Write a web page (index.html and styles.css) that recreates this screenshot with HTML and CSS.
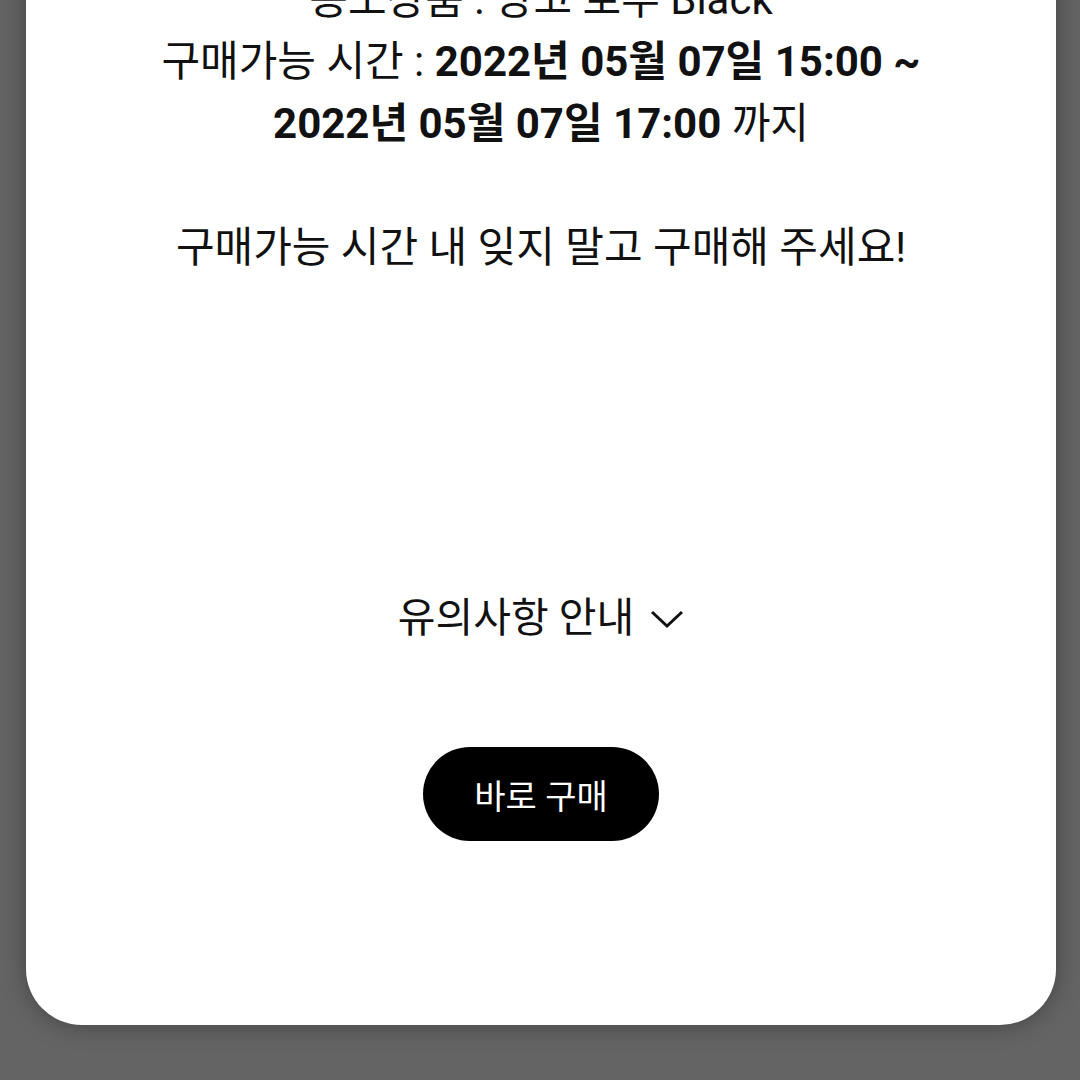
FILE: index.html
```html
<!DOCTYPE html>
<html lang="ko">
<head>
    <meta charset="UTF-8">
    <meta name="viewport" content="width=device-width, initial-scale=1.0">
    <title>응모 안내</title>
    <link rel="stylesheet" href="styles.css">
</head>
<body>

    <div class="sheet">
        <p class="info">
            응모상품 : 앙고 로부 Black<br>
            구매가능 시간 : <strong>2022년 05월 07일 15:00 ~ 2022년 05월 07일 17:00</strong> 까지<br>
            <br>
            구매가능 시간 내 잊지 말고 구매해 주세요!
        </p>

        <div class="notice-toggle">
            <span>유의사항 안내</span>
            <svg class="chevron" width="34" height="20" viewBox="0 0 34 20">
                <path d="M2 3 L17 17 L32 3" fill="none" stroke="#111" stroke-width="3"/>
            </svg>
        </div>

        <button class="buy-button">바로 구매</button>
    </div>

</body>
</html>
```

FILE: styles.css
```css
body {
    font-family: Roboto, "Noto Sans CJK KR", sans-serif;
    margin: 0;
    background-color: #646464;
    color: #111;
    height: 1080px;
    overflow: hidden;
}
.sheet {
    background: white;
    margin: -131px 24px 0 26px;
    padding: 100px 110px 184px;
    border-radius: 0 0 56px 56px;
    box-shadow: 0 0 24px rgba(0, 0, 0, 0.35);
    display: flex;
    flex-direction: column;
    align-items: center;
}
.info {
    margin: 0;
    font-size: 42px;
    line-height: 62px;
    text-align: center;
}
.info strong {
    font-weight: 700;
}
.notice-toggle {
    margin-top: 308px;
    display: flex;
    align-items: center;
    font-size: 41px;
    line-height: 62px;
}
.chevron {
    margin-left: 16px;
    margin-top: 2px;
}
.buy-button {
    margin-top: 98px;
    width: 236px;
    height: 94px;
    border: none;
    border-radius: 47px;
    background-color: #000;
    color: white;
    font-family: Roboto, "Noto Sans CJK KR", sans-serif;
    font-size: 34px;
    cursor: pointer;
}
```
